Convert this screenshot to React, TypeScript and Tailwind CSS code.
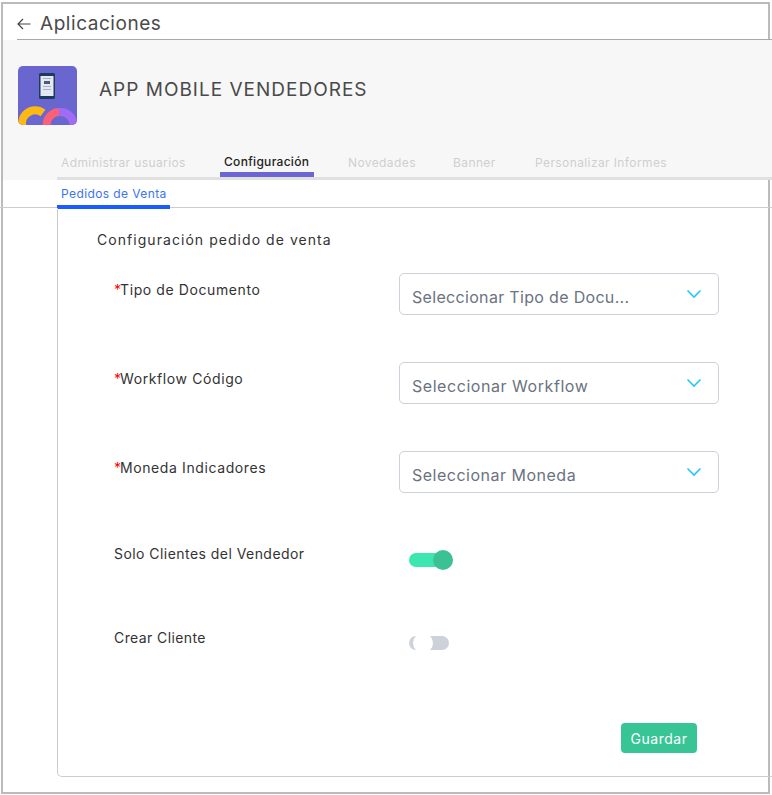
import React from "react";

const font = { fontFamily: '"Inter", "Liberation Sans", sans-serif' };

function Chevron() {
  return (
    <svg width="16" height="10" viewBox="0 0 16 10" fill="none" className="mr-[16px] mt-[-1px]">
      <path d="M1.5 1.5 L8 8 L14.5 1.5" stroke="#22c7fb" strokeWidth="1.6" />
    </svg>
  );
}

function SelectRow({ label, placeholder, tracking }: { label: string; placeholder: string; tracking: string }) {
  return (
    <div className="flex h-[89px] items-start">
      <div className="ml-[111px] w-[285px] pt-[7px] text-[14px] leading-[20px] text-[#333333]">
        <span className="inline-block w-[6px] text-[#ff0000]">*</span>
        <span className="tracking-[0.6px]">{label}</span>
      </div>
      <div className="flex h-[42px] w-[320px] items-center justify-between rounded-[5px] border border-[#ccd0d8] bg-white pl-[12px]">
        <span className={`mt-[5px] text-[16px] leading-[24px] text-[#6b7280] ${tracking}`}>{placeholder}</span>
        <Chevron />
      </div>
    </div>
  );
}

function Logo() {
  return (
    <svg width="59" height="59" viewBox="0 0 59 59" className="shrink-0">
      <defs>
        <clipPath id="logoClip">
          <rect x="0" y="0" width="59" height="59" rx="5" />
        </clipPath>
      </defs>
      <g clipPath="url(#logoClip)">
        <rect x="0" y="0" width="59" height="59" fill="#6a66cf" />
        <rect x="21" y="7" width="16" height="26" rx="1.5" fill="#1d3b5c" />
        <rect x="22.5" y="10" width="13" height="20" fill="#e4e8f2" />
        <rect x="25" y="12" width="8" height="1" fill="#a9b0c2" />
        <rect x="26" y="15" width="6" height="3" fill="#4a5a78" />
        <rect x="25" y="20" width="8" height="1" fill="#a9b0c2" />
        <rect x="25" y="23" width="8" height="1" fill="#a9b0c2" />
        <path d="M5 62 A 13 13 0 0 1 25 47" fill="none" stroke="#fdb813" strokeWidth="8" />
        <path d="M29 62 A 13 13 0 0 1 41 46" fill="none" stroke="#fb6078" strokeWidth="8" />
        <path d="M41 46 A 13 13 0 0 1 55 62" fill="none" stroke="#a06bf5" strokeWidth="8" />
      </g>
    </svg>
  );
}

export default function App() {
  const tabs = [
    { label: "Administrar usuarios", w: "w-[163px]", active: false },
    { label: "Configuración", w: "w-[124px]", active: true },
    { label: "Novedades", w: "w-[105px]", active: false },
    { label: "Banner", w: "w-[82px]", active: false },
    { label: "Personalizar Informes", w: "w-[160px]", active: false },
  ];
  return (
    <div className="h-[795px] w-[772px] overflow-hidden bg-white pl-[1px] pt-[2px]" style={font}>
      <div className="h-[792px] w-[769px] border-2 border-[#bbbbbb] bg-white">
        {/* top bar */}
        <div className="ml-[14px] mr-[-4px] flex h-[36px] items-center border-b border-[#a8a8a8] pt-[5px]">
          <svg width="14" height="12" viewBox="0 0 14 12" fill="none">
            <path d="M13.5 6 H1 M6 1 L1 6 L6 11" stroke="#444444" strokeWidth="1.2" />
          </svg>
          <span className="ml-[9px] text-[19px] leading-[24px] tracking-[0.55px] text-[#4a4a4a]">Aplicaciones</span>
        </div>

        {/* gray header */}
        <div className="mr-[-4px] h-[140px] bg-[#f7f7f7]">
          <div className="flex items-center pl-[15px] pt-[26px]">
            <Logo />
            <span className="ml-[22px] mt-[-11px] text-[19px] leading-[24px] tracking-[1px] text-[#4a4a4a]">
              APP MOBILE VENDEDORES
            </span>
          </div>
          <div className="ml-[54px] mt-[27px] flex h-[28px] border-b-[3px] border-[#e0e0e0]">
            {tabs.map((t) => (
              <div key={t.label} className={`${t.w} shrink-0`}>
                {t.active ? (
                  <div className="box-border h-[25px] w-[94px] border-b-[5px] border-[#6b66d1] pl-[4px] text-[12px] font-medium leading-[20px] tracking-[0.3px] text-[#222222]">
                    {t.label}
                  </div>
                ) : (
                  <div className="pl-[4px] text-[12px] leading-[21px] tracking-[0.4px] text-[#cfcfcf]">{t.label}</div>
                )}
              </div>
            ))}
          </div>
        </div>

        {/* sub tab bar */}
        <div className="ml-[-3px] mr-[-4px] h-[28px] border-b border-[#cccccc]">
          <div className="ml-[57px] box-border h-[29px] w-[113px] border-b-[4px] border-[#1a5cff] pl-[4px] text-[12px] leading-[28px] tracking-[0.4px] text-[#3b74f5]">
            Pedidos de Venta
          </div>
        </div>

        {/* card */}
        <div className="ml-[54px] mr-[-4px] h-[569px] rounded-bl-[5px] border-b border-l border-[#cccccc]">
          <div className="pl-[39px] pt-[22px] text-[14px] leading-[20px] tracking-[1.05px] text-[#333333]">
            Configuración pedido de venta
          </div>
          <div className="ml-[-55px] pt-[23px]">
            <SelectRow label="Tipo de Documento" placeholder="Seleccionar Tipo de Docu..." tracking="tracking-[0.32px]" />
            <SelectRow label="Workflow Código" placeholder="Seleccionar Workflow" tracking="tracking-[0.55px]" />
            <SelectRow label="Moneda Indicadores" placeholder="Seleccionar Moneda" tracking="tracking-[0.5px]" />
          </div>
          <div className="flex h-[84px] items-start">
            <div className="ml-[56px] w-[295px] pt-[4px] text-[14px] leading-[20px] tracking-[0.45px] text-[#333333]">
              Solo Clientes del Vendedor
            </div>
            <div className="relative mt-[13px] h-[14px] w-[34px] rounded-full bg-[#3de6ae]">
              <div className="absolute left-[24px] top-[-3px] h-[20px] w-[20px] rounded-full bg-[#3cc194]" />
            </div>
          </div>
          <div className="flex h-[99px] items-start">
            <div className="ml-[56px] w-[295px] pt-[4px] text-[14px] leading-[20px] tracking-[0.4px] text-[#333333]">
              Crear Cliente
            </div>
            <div className="relative mt-[12px] h-[14px] w-[40px] rounded-full bg-[#cdd2da]">
              <div className="absolute left-[4px] top-[-3px] h-[20px] w-[20px] rounded-full bg-white" />
            </div>
          </div>
          <div className="ml-[563px] flex h-[30px] w-[76px] items-center justify-center rounded-[4px] bg-[#37c595] text-[14px] tracking-[0.5px] text-white">
            Guardar
          </div>
        </div>
      </div>
    </div>
  );
}
